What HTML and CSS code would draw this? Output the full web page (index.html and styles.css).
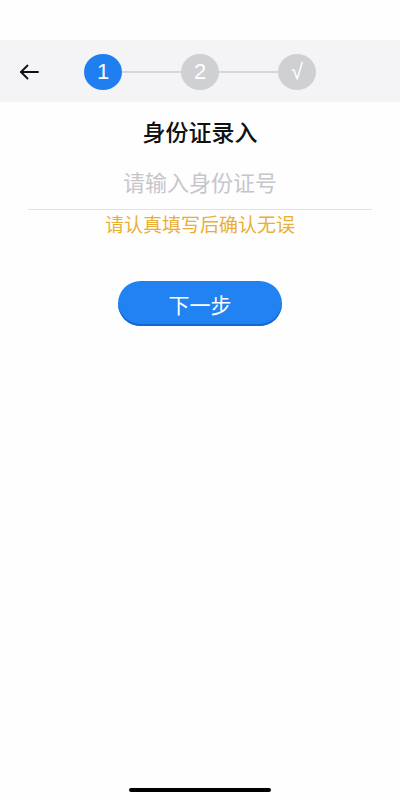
FILE: index.html
```html
<!DOCTYPE html>
<html lang="zh-CN">
<head>
    <meta charset="UTF-8">
    <meta name="viewport" content="width=device-width, initial-scale=1.0">
    <title>身份证录入</title>
    <link rel="stylesheet" href="styles.css">
</head>
<body>
    <div class="status-bar"></div>
    <div class="nav-bar">
        <button class="back-btn" aria-label="返回">
            <svg width="20" height="16" viewBox="0 0 20 16" fill="none" stroke="#111" stroke-width="1.8" stroke-linecap="round" stroke-linejoin="round">
                <path d="M19 8H2"/>
                <path d="M8.5 1.5L2 8l6.5 6.5"/>
            </svg>
        </button>
        <div class="steps">
            <div class="step active">1</div>
            <div class="step-line"></div>
            <div class="step">2</div>
            <div class="step-line"></div>
            <div class="step">√</div>
        </div>
    </div>
    <div class="content">
        <h1 class="title">身份证录入</h1>
        <input class="id-input" type="text" placeholder="请输入身份证号">
        <p class="hint">请认真填写后确认无误</p>
        <button class="next-btn">下一步</button>
    </div>
    <div class="home-indicator"></div>
</body>
</html>
```

FILE: styles.css
```css
body {
    font-family: "Noto Sans CJK SC", "Noto Sans", sans-serif;
    margin: 0;
    width: 400px;
    height: 800px;
    background-color: #fefefe;
    position: relative;
    overflow: hidden;
}
.status-bar {
    height: 40px;
}
.nav-bar {
    height: 62px;
    background-color: #f4f4f6;
    display: flex;
    align-items: center;
    padding-top: 1px;
    box-sizing: border-box;
}
.back-btn {
    width: 40px;
    margin-left: 9px;
    padding: 0;
    border: none;
    background: none;
    display: flex;
    align-items: center;
    justify-content: center;
}
.steps {
    display: flex;
    align-items: center;
    margin-left: 35px;
}
.step {
    width: 38px;
    height: 36px;
    border-radius: 50%;
    background-color: #cfd0d4;
    color: #fff;
    font-family: "Liberation Sans", Arial, sans-serif;
    font-size: 22px;
    line-height: 36px;
    text-align: center;
}
.step.active {
    background-color: #1f7ff0;
}
.step-line {
    width: 59px;
    height: 2px;
    background-color: #d6d6da;
}
.content {
    display: flex;
    flex-direction: column;
    align-items: center;
}
.title {
    margin: 14px 0 0;
    font-size: 23px;
    font-weight: 500;
    color: #111;
    line-height: 30px;
}
.id-input {
    width: 344px;
    margin-top: 19px;
    padding: 0 0 12px;
    border: none;
    border-bottom: 1px solid #e2e2e4;
    background: transparent;
    font-family: inherit;
    font-size: 22px;
    line-height: 30px;
    height: 45px;
    box-sizing: border-box;
    text-align: center;
    outline: none;
}
.id-input::placeholder {
    color: #c6c6ca;
}
.hint {
    margin: 0;
    font-size: 19px;
    line-height: 28px;
    color: #eaae35;
}
.next-btn {
    margin-top: 43px;
    width: 164px;
    height: 45px;
    border: none;
    border-radius: 23px;
    background-color: #2182f2;
    box-shadow: inset 0 -2px 0 #1566d4;
    color: #fff;
    font-family: inherit;
    font-size: 21px;
    cursor: pointer;
}
.home-indicator {
    position: absolute;
    left: 129px;
    bottom: 8px;
    width: 142px;
    height: 4px;
    border-radius: 2px;
    background-color: #000;
}
```
